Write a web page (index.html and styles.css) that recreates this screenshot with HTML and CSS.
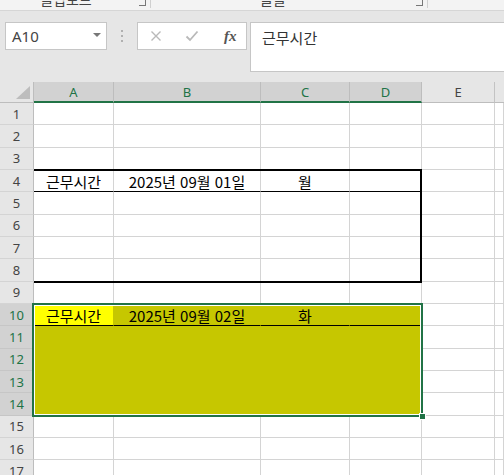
FILE: index.html
```html
<!DOCTYPE html>
<html lang="ko">
<head>
<meta charset="utf-8">
<title>Excel</title>
<link rel="stylesheet" href="styles.css">
</head>
<body>
<div class="ribbon">
  <div class="group g1"><span class="glabel">클립보드</span><span class="launch"></span></div>
  <div class="group g2"><span class="glabel">글꼴</span><span class="launch"></span></div>
</div>
<div class="toolbar">
  <div class="namebox"><span class="ref">A10</span><span class="caret"></span></div>
  <div class="dots"><i></i><i></i><i></i></div>
  <div class="fxbox">
    <svg class="ic" width="12" height="12" viewBox="0 0 12 12"><path d="M1.5 1.5L10.5 10.5M10.5 1.5L1.5 10.5" stroke="#b9b9b9" stroke-width="1.4" fill="none"/></svg>
    <svg class="ic" width="14" height="12" viewBox="0 0 14 12"><path d="M1.5 6.5L5 10L12.5 1.5" stroke="#b9b9b9" stroke-width="1.8" fill="none"/></svg>
    <span class="fx">fx</span>
  </div>
  <div class="formula">근무시간</div>
</div>
<div class="sheet">
  <div class="g cells">
    <div class="corner"><span class="tri"></span></div>
    <div class="ch sel">A</div><div class="ch sel">B</div><div class="ch sel">C</div><div class="ch sel">D</div><div class="ch">E</div><div class="ch last"></div>

    <div class="rh">1</div><div class="c"></div><div class="c"></div><div class="c"></div><div class="c"></div><div class="c"></div><div class="c"></div>
    <div class="rh">2</div><div class="c"></div><div class="c"></div><div class="c"></div><div class="c"></div><div class="c"></div><div class="c"></div>
    <div class="rh">3</div><div class="c"></div><div class="c"></div><div class="c"></div><div class="c"></div><div class="c"></div><div class="c"></div>
    <div class="rh">4</div><div class="c bb">근무시간</div><div class="c bb">2025년 09월 01일</div><div class="c bb">월</div><div class="c bb"></div><div class="c"></div><div class="c"></div>
    <div class="rh">5</div><div class="c"></div><div class="c"></div><div class="c"></div><div class="c"></div><div class="c"></div><div class="c"></div>
    <div class="rh">6</div><div class="c"></div><div class="c"></div><div class="c"></div><div class="c"></div><div class="c"></div><div class="c"></div>
    <div class="rh">7</div><div class="c"></div><div class="c"></div><div class="c"></div><div class="c"></div><div class="c"></div><div class="c"></div>
    <div class="rh">8</div><div class="c"></div><div class="c"></div><div class="c"></div><div class="c"></div><div class="c"></div><div class="c"></div>
    <div class="rh">9</div><div class="c"></div><div class="c"></div><div class="c"></div><div class="c"></div><div class="c"></div><div class="c"></div>
    <div class="rh sel">10</div><div class="c yel bb">근무시간</div><div class="c fill bb">2025년 09월 02일</div><div class="c fill bb">화</div><div class="c fill bb"></div><div class="c"></div><div class="c"></div>
    <div class="rh sel">11</div><div class="c fill"></div><div class="c fill"></div><div class="c fill"></div><div class="c fill"></div><div class="c"></div><div class="c"></div>
    <div class="rh sel">12</div><div class="c fill"></div><div class="c fill"></div><div class="c fill"></div><div class="c fill"></div><div class="c"></div><div class="c"></div>
    <div class="rh sel">13</div><div class="c fill"></div><div class="c fill"></div><div class="c fill"></div><div class="c fill"></div><div class="c"></div><div class="c"></div>
    <div class="rh sel">14</div><div class="c fill"></div><div class="c fill"></div><div class="c fill"></div><div class="c fill"></div><div class="c"></div><div class="c"></div>
    <div class="rh">15</div><div class="c"></div><div class="c"></div><div class="c"></div><div class="c"></div><div class="c"></div><div class="c"></div>
    <div class="rh">16</div><div class="c"></div><div class="c"></div><div class="c"></div><div class="c"></div><div class="c"></div><div class="c"></div>
    <div class="rh">17</div><div class="c"></div><div class="c"></div><div class="c"></div><div class="c"></div><div class="c"></div><div class="c"></div>
  </div>
  <div class="g overlay">
    <div class="tblbox"></div>
    <div class="selbox"><span class="handle"></span></div>
  </div>
</div>
</body>
</html>
```

FILE: styles.css
```css
* { box-sizing: border-box; }
html, body { margin: 0; padding: 0; }
body {
  width: 504px;
  height: 475px;
  overflow: hidden;
  background: #e6e6e6;
  font-family: "Noto Sans", "Noto Sans CJK KR", sans-serif;
  color: #444;
}

/* ribbon strip */
.ribbon {
  height: 11px;
  background: #f3f3f3;
  border-bottom: 1px solid #d6d6d6;
  display: flex;
  overflow: hidden;
}
.group {
  position: relative;
  display: flex;
  justify-content: center;
  border-right: 1px solid #d0d0d0;
  height: 8px;
}
.g1 { width: 151px; }
.g2 { width: 277px; }
.glabel {
  font-family: "Noto Sans CJK KR", sans-serif;
  font-size: 14px;
  line-height: 14px;
  margin-top: -8px;
  color: #444;
  padding-right: 18px;
}
.g2 .glabel { padding-right: 32px; }
.launch {
  position: absolute;
  right: 4px;
  top: 0;
  width: 7px;
  height: 6px;
  border-right: 1px solid #777;
  border-bottom: 1px solid #777;
}

/* formula toolbar */
.toolbar {
  height: 71px;
  padding: 11px 0 0 5px;
  display: flex;
  align-items: flex-start;
}
.namebox {
  width: 102px;
  height: 28px;
  background: #fff;
  border: 1px solid #c6c6c6;
  display: flex;
  align-items: center;
  justify-content: space-between;
  padding: 0 5px 0 6px;
}
.ref { font-size: 15px; color: #444; }
.caret {
  width: 0; height: 0;
  border-left: 4px solid transparent;
  border-right: 4px solid transparent;
  border-top: 4px solid #777;
  margin-bottom: 3px;
}
.dots {
  margin: 8px 0 0 14px;
  width: 2px;
  display: flex;
  flex-direction: column;
  gap: 3px;
}
.dots i { display: block; width: 2px; height: 2px; background: #b0b0b0; }
.fxbox {
  margin-left: 14px;
  width: 110px;
  height: 28px;
  background: #fff;
  border: 1px solid #c6c6c6;
  display: flex;
  align-items: center;
  padding-left: 12px;
  gap: 23px;
}
.ic { display: block; }
.fx {
  font-family: "Liberation Serif", serif;
  font-style: italic;
  font-weight: bold;
  font-size: 15px;
  color: #555;
  margin-left: 2px;
}
.formula {
  margin-left: 3px;
  margin-right: -4px;
  flex: 1;
  height: 50px;
  background: #fff;
  border: 1px solid #c6c6c6;
  font-family: "Noto Sans CJK KR", sans-serif;
  font-size: 15px;
  line-height: 20px;
  padding: 5px 0 0 11px;
  color: #333;
}

/* sheet grid */
.sheet {
  display: grid;
  background: #fff;
}
.g {
  grid-area: 1 / 1;
  display: grid;
  grid-template-columns: 34px 80px 147px 89px 72px 73px 1fr;
  grid-template-rows: 21px repeat(17, 22.33px);
}
.overlay { pointer-events: none; }
.corner {
  background: #e6e6e6;
  border-right: 1px solid #bdbdbd;
  border-bottom: 1px solid #bdbdbd;
  position: relative;
}
.tri {
  position: absolute;
  right: 3px;
  bottom: 3px;
  width: 0; height: 0;
  border-left: 14px solid transparent;
  border-bottom: 13px solid #bdbdbd;
}
.ch {
  background: #e6e6e6;
  border-right: 1px solid #c3c3c3;
  border-bottom: 1px solid #bdbdbd;
  font-size: 13px;
  display: flex;
  align-items: center;
  justify-content: center;
  color: #444;
}
.ch.sel {
  background: #d2d2d2;
  border-bottom: 2px solid #217346;
  color: #217346;
  border-right-color: #bdbdbd;
}
.ch.last { border-right: none; }
.rh {
  background: #e6e6e6;
  border-right: 1px solid #bdbdbd;
  border-bottom: 1px solid #d4d4d4;
  font-size: 13px;
  display: flex;
  align-items: center;
  justify-content: center;
  color: #444;
}
.rh.sel { background: #d2d2d2; color: #217346; border-bottom-color: #c6c6c6; }
.c {
  border-right: 1px solid #d4d4d4;
  border-bottom: 1px solid #d4d4d4;
  display: flex;
  align-items: center;
  justify-content: center;
  font-family: "Noto Sans CJK KR", sans-serif;
  font-size: 15px;
  color: #000;
  white-space: nowrap;
  padding-top: 1px;
}
.c.fill { background: #c6c700; border-color: #c6c700; }
.c.yel { background: #ffff00; border-right-color: #c6c700; border-bottom-color: #c6c700; }
.c.bb { border-bottom-color: #000; }

.tblbox {
  grid-column: 2 / 6;
  grid-row: 5 / 10;
  border: 2px solid #000;
  border-left: none;
  margin: -1px 0 -1px 0;
}
.selbox {
  grid-column: 2 / 6;
  grid-row: 11 / 16;
  border: 2px solid #217346;
  box-shadow: inset 0 0 0 1px #fff;
  margin: -1px -1px -1px -2px;
  position: relative;
}
.handle {
  position: absolute;
  right: -5px;
  bottom: -5px;
  width: 7px;
  height: 7px;
  background: #217346;
  border: 1px solid #fff;
}
```
